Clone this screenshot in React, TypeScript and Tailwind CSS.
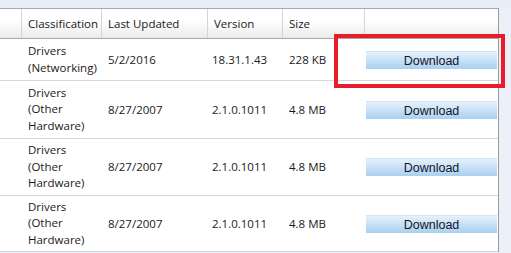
import React from 'react'

interface Row {
  classification: string[]
  updated: string
  version: string
  size: string
  height: string
}

const rows: Row[] = [
  { classification: ['Drivers', '(Networking)'], updated: '5/2/2016', version: '18.31.1.43', size: '228 KB', height: 'h-[42px]' },
  { classification: ['Drivers', '(Other', 'Hardware)'], updated: '8/27/2007', version: '2.1.0.1011', size: '4.8 MB', height: 'h-[58px]' },
  { classification: ['Drivers', '(Other', 'Hardware)'], updated: '8/27/2007', version: '2.1.0.1011', size: '4.8 MB', height: 'h-[57px]' },
  { classification: ['Drivers', '(Other', 'Hardware)'], updated: '8/27/2007', version: '2.1.0.1011', size: '4.8 MB', height: 'h-[56px]' },
]

const cols = 'grid grid-cols-[22px_80px_106px_75px_82px_133px]'

function HeaderCell({ label, last }: { label?: string; last?: boolean }) {
  return (
    <div className={`flex items-center pl-[6px] ${last ? '' : 'border-r border-[#d5d5d5]'}`}>
      {label}
    </div>
  )
}

export default function App() {
  return (
    <div
      className="relative w-[511px] h-[253px] overflow-hidden bg-[#ecf1f9] text-[11.5px] text-[#1a1a1a]"
      style={{ fontFamily: '"Segoe UI", "Open Sans", sans-serif' }}
    >
      {/* top strip */}
      <div className="h-[8px] bg-[#e8eef8]" />

      <div className="w-[499px] border-r border-[#9a9a9a] bg-white">
        {/* Header */}
        <div className={`${cols} h-[31px] border-t border-b border-[#a8a8a8] bg-gradient-to-b from-white from-40% to-[#ebebeb]`}>
          <HeaderCell />
          <HeaderCell label="Classification" />
          <HeaderCell label="Last Updated" />
          <HeaderCell label="Version" />
          <HeaderCell label="Size" />
          <HeaderCell last />
        </div>

        {/* Rows */}
        {rows.map((r, i) => (
          <div key={i} className={`${cols} ${r.height} border-b border-[#d9d9d9] items-center`}>
            <div />
            <div className="pl-[6px] leading-[16.5px] whitespace-nowrap">
              {r.classification.map(line => (
                <div key={line}>{line}</div>
              ))}
            </div>
            <div className="pl-[6px]">{r.updated}</div>
            <div className="pl-[4px]">{r.version}</div>
            <div className="pl-[6px]">{r.size}</div>
            <div className="flex pl-[1px]">
              <button
                className="w-[131px] h-[18px] bg-gradient-to-b from-[#e6f1fb] to-[#a8d0ef] text-[12.5px] leading-[18px] text-[#14142a] text-center border-t border-[#d0e4f5]"
                style={{ fontFamily: '"Liberation Sans", Arial, sans-serif' }}
              >
                Download
              </button>
            </div>
          </div>
        ))}
      </div>

      {/* Highlight box */}
      <div className="absolute left-[334px] top-[34px] w-[171px] h-[54px] border-[4px] border-[#e81c2b]" />
    </div>
  )
}
